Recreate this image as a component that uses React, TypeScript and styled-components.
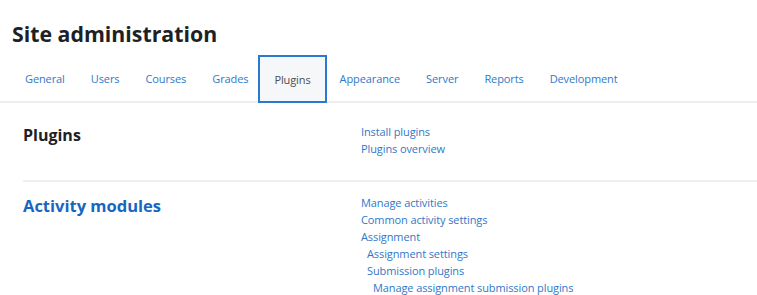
import React from "react";
import styled, { createGlobalStyle } from "styled-components";

const Global = createGlobalStyle`
  html, body { margin: 0; padding: 0; background: #ffffff; }
  body { font-family: "Open Sans", "Noto Sans", sans-serif; color: #1d2125; }
  * { box-sizing: border-box; }
`;

const Page = styled.div`
  width: 757px;
  height: 295px;
  overflow: hidden;
  background: #fff;
`;

const Title = styled.h1`
  margin: 0;
  padding: 20px 0 0 12px;
  height: 55px;
  font-size: 21.3px;
  line-height: 28px;
  font-weight: 700;
  color: #1d2125;
`;

const TabBar = styled.nav`
  display: flex;
  align-items: stretch;
  height: 48px;
  padding-left: 12px;
  border-bottom: 2px solid #eceef0;
`;

const Tab = styled.a<{ $active?: boolean }>`
  display: flex;
  align-items: center;
  padding: 0 ${(p) => (p.$active ? "14px" : "11px")};
  margin: ${(p) => (p.$active ? "0 0 -2px -3px" : "0")};
  border: 2px solid ${(p) => (p.$active ? "#2a78cf" : "transparent")};
  background: ${(p) => (p.$active ? "#f6f7f8" : "transparent")};
  color: ${(p) => (p.$active ? "#4a4f55" : "#2f78c8")};
  font-size: 11px;
  letter-spacing: -0.1px;
  text-decoration: none;
  white-space: nowrap;
`;

const Section = styled.section<{ $divider?: boolean }>`
  display: grid;
  grid-template-columns: 338px 1fr;
  margin-left: 23px;
  padding-top: ${(p) => (p.$divider ? "12px" : "20px")};
  padding-bottom: 23px;
  border-top: ${(p) => (p.$divider ? "2px solid #eceef0" : "none")};
`;

const Heading = styled.h2<{ $link?: boolean }>`
  margin: 0;
  font-size: ${(p) => (p.$link ? "16.5px" : "16px")};
  line-height: 24px;
  font-weight: 700;
  color: ${(p) => (p.$link ? "#1766c2" : "#1d2125")};
`;

const Links = styled.ul`
  list-style: none;
  margin: 0;
  padding: 0;
`;

const LinkItem = styled.li<{ $level?: number }>`
  padding-left: ${(p) => (p.$level ?? 0) * 6}px;
  font-size: 11px;
  letter-spacing: -0.1px;
  line-height: 17px;
  color: #2f78c8;
  white-space: nowrap;
`;

const tabs = ["General", "Users", "Courses", "Grades", "Plugins", "Appearance", "Server", "Reports", "Development"];

export default function App() {
  return (
    <Page>
      <Global />
      <Title>Site administration</Title>
      <TabBar>
        {tabs.map((t) => (
          <Tab key={t} $active={t === "Plugins"}>{t}</Tab>
        ))}
      </TabBar>
      <Section>
        <Heading>Plugins</Heading>
        <Links>
          <LinkItem>Install plugins</LinkItem>
          <LinkItem>Plugins overview</LinkItem>
        </Links>
      </Section>
      <Section $divider>
        <Heading $link>Activity modules</Heading>
        <Links>
          <LinkItem>Manage activities</LinkItem>
          <LinkItem>Common activity settings</LinkItem>
          <LinkItem>Assignment</LinkItem>
          <LinkItem $level={1}>Assignment settings</LinkItem>
          <LinkItem $level={1}>Submission plugins</LinkItem>
          <LinkItem $level={2}>Manage assignment submission plugins</LinkItem>
        </Links>
      </Section>
    </Page>
  );
}
